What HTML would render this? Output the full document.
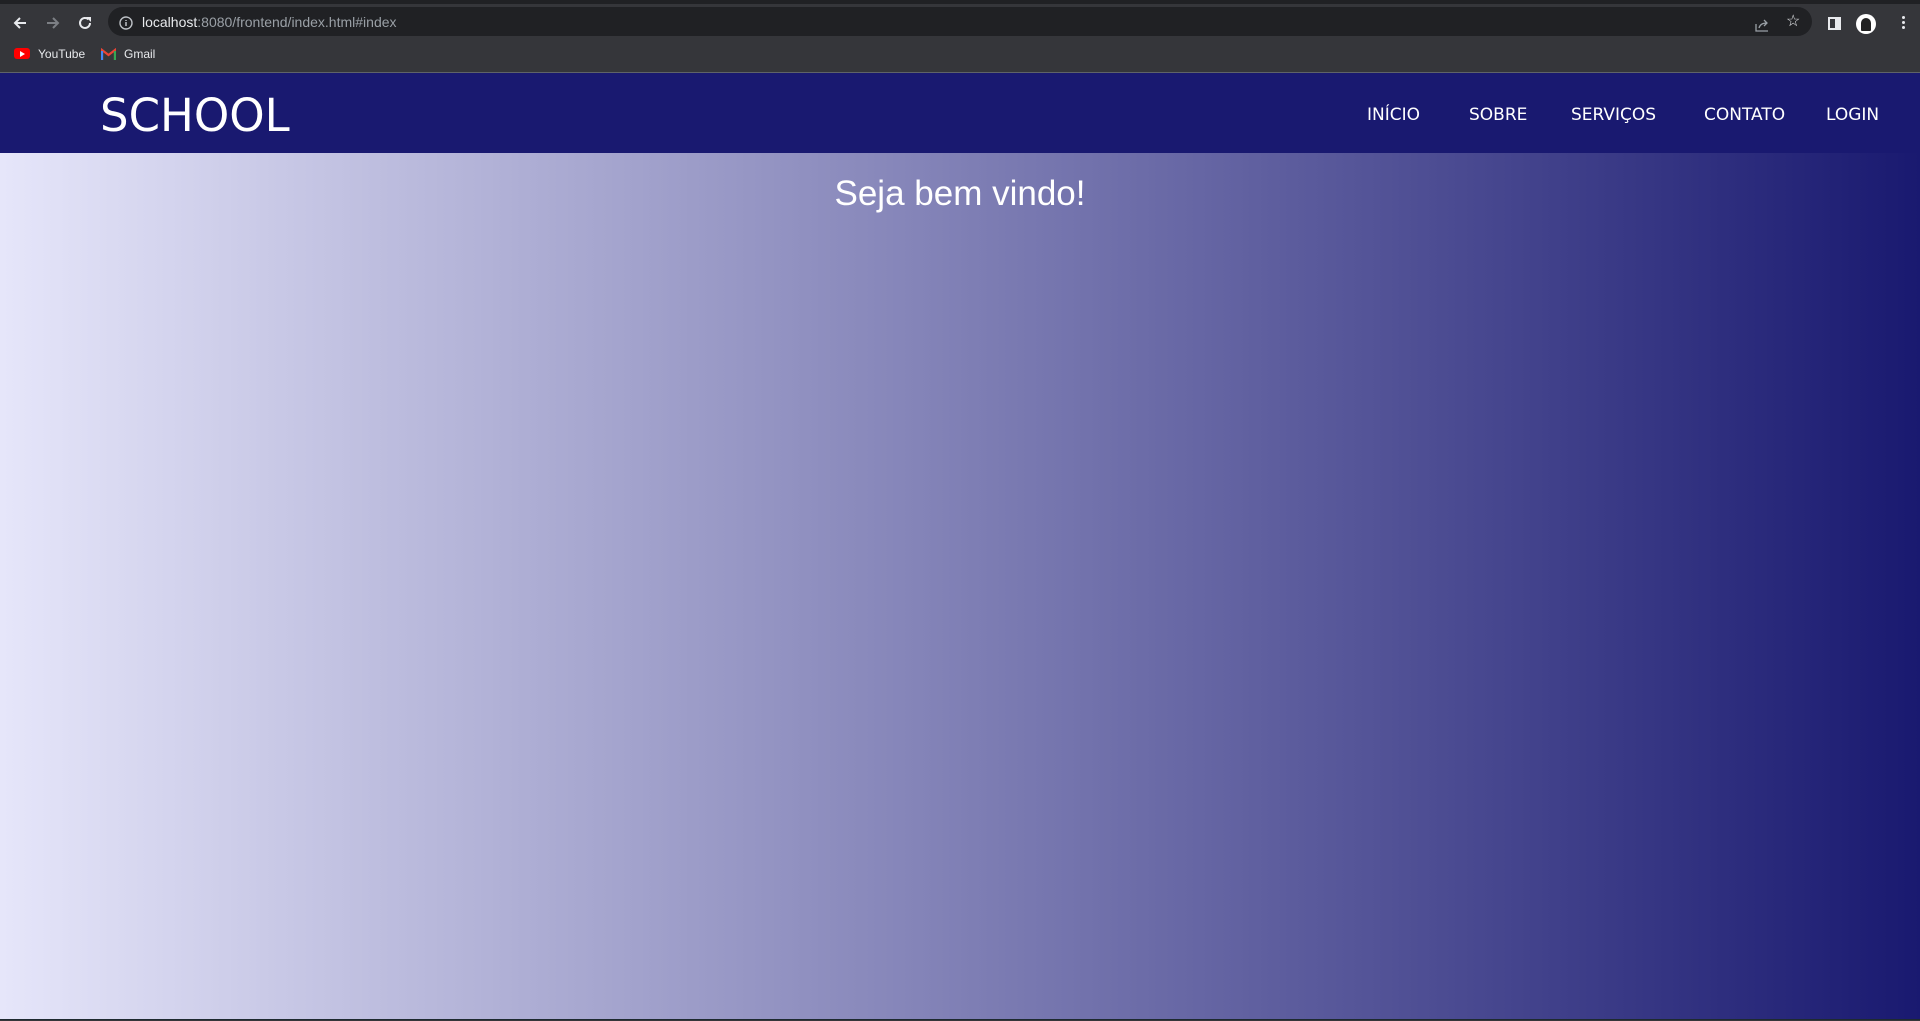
<!DOCTYPE html>
<html><head><meta charset="utf-8"><style>
*{margin:0;padding:0;box-sizing:border-box}
html,body{width:1920px;height:1021px;overflow:hidden;background:#35363a;font-family:"Liberation Sans",sans-serif}
.tabs{height:4px;background:#202124}
.tool{height:32px;background:#35363a;position:relative}
.omni{position:absolute;left:108px;top:3px;width:1704px;height:29px;border-radius:15px;background:#202124}
.url{position:absolute;left:142px;top:10px;font-size:14px;color:#9aa0a6}
.url b{font-weight:normal;color:#e8eaed}
.bm{height:36px;background:#35363a;position:relative;font-size:12px;color:#e8eaed}
.line{height:1px;background:#5f6368}
nav{height:80px;background:#191970;position:relative;color:#fff}
.logo{position:absolute;left:100px;top:16px;font-family:"DejaVu Sans",sans-serif;font-size:45px}
.nav a{position:absolute;top:32px;font-family:"DejaVu Sans",sans-serif;font-size:17px;color:#fff;text-decoration:none}
main{height:867px;background:linear-gradient(to right,#e6e6fa,#191970);position:relative;border-bottom:1px solid #1e2a30}
h1{position:absolute;left:0;right:0;top:21px;text-align:center;font-weight:normal;color:#fff;font-size:35px}
</style></head><body>
<div class="tabs"></div>
<div class="tool">
<svg style="position:absolute;left:12px;top:11px" width="16" height="16" viewBox="0 0 16 16"><path d="M14 8H3M8 3L3 8l5 5" stroke="#e8eaed" stroke-width="2" fill="none"/></svg>
<svg style="position:absolute;left:45px;top:11px" width="16" height="16" viewBox="0 0 16 16"><path d="M2 8h11M8 3l5 5-5 5" stroke="#7c7f84" stroke-width="2" fill="none"/></svg>
<svg style="position:absolute;left:77px;top:11px" width="16" height="16" viewBox="0 0 16 16"><path d="M13 8a5 5 0 1 1-1.5-3.6" stroke="#e8eaed" stroke-width="2" fill="none"/><path d="M9 2h5v5z" fill="#e8eaed"/></svg>
<div class="omni"></div>
<svg style="position:absolute;left:119px;top:12px" width="14" height="14" viewBox="0 0 14 14"><circle cx="7" cy="7" r="6" stroke="#bdc1c6" stroke-width="1.4" fill="none"/><path d="M7 6v4M7 4v1" stroke="#bdc1c6" stroke-width="1.5"/></svg>
<div class="url"><b>localhost</b>:8080/frontend/index.html#index</div>
<svg style="position:absolute;left:1755px;top:14px" width="14" height="14" viewBox="0 0 14 14"><path d="M1 6v7h12M4 10c1-4 4-5 8-5M9 2l3 3-3 3" stroke="#9aa0a6" stroke-width="1.3" fill="none"/></svg>
<span style="position:absolute;left:1786px;top:7px;color:#e8eaed;font-size:16px">☆</span>
<div style="position:absolute;left:1828px;top:13px;width:13px;height:13px;border:2px solid #e8eaed;border-right-width:6px"></div>
<div style="position:absolute;left:1856px;top:10px;width:20px;height:20px;border-radius:50%;background:#fff"><div style="margin:4px auto;width:10px;height:13px;background:#222;border-radius:5px 5px 1px 1px"></div></div>
<div style="position:absolute;left:1902px;top:12px;width:3px;height:3px;background:#e8eaed;border-radius:50%;box-shadow:0 5px #e8eaed,0 10px #e8eaed"></div>
</div>
<div class="bm">
<div style="position:absolute;left:14px;top:12px;width:16px;height:11px;background:#f00;border-radius:3px"></div>
<div style="position:absolute;left:20px;top:15px;border-left:5px solid #fff;border-top:3px solid transparent;border-bottom:3px solid transparent"></div>
<span style="position:absolute;left:38px;top:11px">YouTube</span>
<svg style="position:absolute;left:101px;top:12px" width="15" height="12" viewBox="0 0 15 12"><path d="M1 12V2l6.5 5L14 2v10" stroke="#ea4335" stroke-width="2.2" fill="none"/><path d="M1 3v9" stroke="#4285f4" stroke-width="2.2"/><path d="M14 3v9" stroke="#34a853" stroke-width="2.2"/></svg>
<span style="position:absolute;left:124px;top:11px">Gmail</span>
</div>
<div class="line"></div>
<nav>
<div class="logo">SCHOOL</div>
<div class="nav">
<a style="left:1367px">INÍCIO</a>
<a style="left:1469px">SOBRE</a>
<a style="left:1571px">SERVIÇOS</a>
<a style="left:1704px">CONTATO</a>
<a style="left:1826px">LOGIN</a>
</div>
</nav>
<main><h1>Seja bem vindo!</h1></main>
</body></html>
